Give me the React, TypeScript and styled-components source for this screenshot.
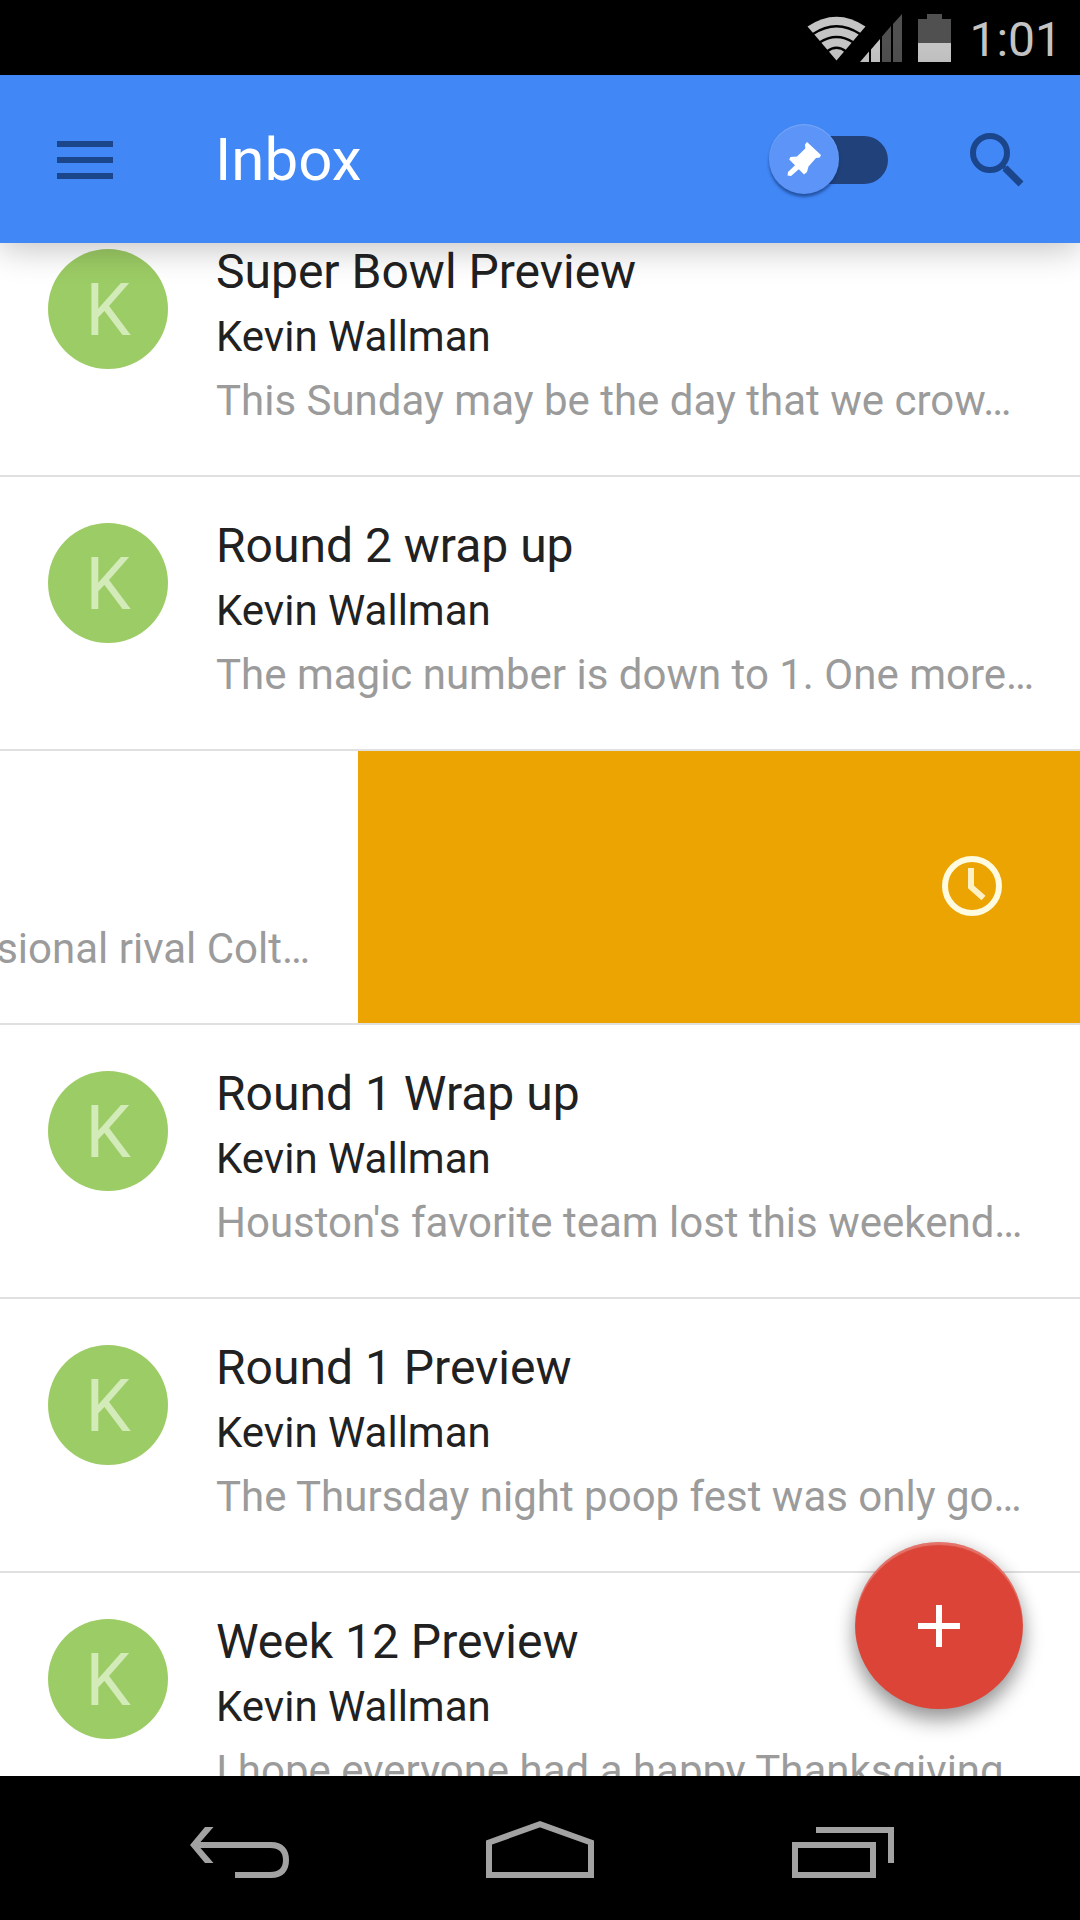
import React from "react";
import styled, { createGlobalStyle } from "styled-components";

const GlobalStyle = createGlobalStyle`
  * { box-sizing: border-box; }
  body {
    margin: 0;
    background: #000;
    font-family: Roboto, "Noto Sans", sans-serif;
  }
`;

const Screen = styled.div`
  display: flex;
  flex-direction: column;
  height: 100vh;
  overflow: hidden;
`;

const StatusBar = styled.div`
  display: flex;
  align-items: center;
  justify-content: flex-end;
  flex: none;
  height: 75px;
  padding: 0 18px;
  background: #000;
  color: #c4c4c4;
`;

const StatusIcons = styled.svg`
  display: block;
  margin-right: 18px;
`;

const Time = styled.time`
  padding-top: 4px;
  font-size: 48px;
  line-height: 64px;
`;

const AppBar = styled.header`
  position: relative;
  z-index: 1;
  display: flex;
  align-items: center;
  flex: none;
  height: 168px;
  padding: 2px 56px 0;
  background: #4187f6;
  box-shadow: 0 6px 32px rgba(0, 0, 0, 0.24);
`;

const IconButton = styled.button`
  display: flex;
  align-items: center;
  justify-content: center;
  padding: 0;
  border: 0;
  background: none;
  color: #1c468c;
  cursor: pointer;
`;

const Title = styled.h1`
  flex: 1;
  margin: 0 0 0 101px;
  color: #fff;
  font-size: 60px;
  font-weight: 400;
  line-height: 72px;
`;

const Toggle = styled.label`
  display: grid;
  align-items: center;
  width: 119px;
  height: 72px;
  margin-right: 82px;
  cursor: pointer;

  & > * {
    grid-area: 1 / 1;
  }
`;

const ToggleInput = styled.input`
  width: 100%;
  height: 100%;
  margin: 0;
  opacity: 0;
`;

const Track = styled.span`
  justify-self: end;
  width: 98px;
  height: 48px;
  border-radius: 24px;
  background: #21417a;
`;

const Knob = styled.span`
  display: flex;
  align-items: center;
  justify-content: center;
  align-self: start;
  width: 70px;
  height: 70px;
  border-radius: 50%;
  background: #5c95f7;
  box-shadow: 0 3px 3px rgba(16, 48, 110, 0.6), inset 0 1px 1px rgba(255, 255, 255, 0.2);
`;

const Main = styled.main`
  position: relative;
  flex: 1;
  min-height: 0;
  overflow: hidden;
  background: #fff;
`;

const List = styled.ul`
  margin: -40px 0 0;
  padding: 0;
  list-style: none;
`;

const Row = styled.li`
  display: flex;
  height: 274px;
  padding: 37px 48px 0;
  border-bottom: 2px solid #e0e0e0;
`;

const Avatar = styled.div`
  display: flex;
  align-items: center;
  justify-content: center;
  flex: none;
  width: 120px;
  height: 120px;
  margin: 9px 48px 0 0;
  padding-top: 4px;
  border-radius: 50%;
  background: #9ccc65;
  color: #d3eab9;
  font-size: 72px;
  line-height: 84px;
`;

const Message = styled.div`
  flex: 1;
  min-width: 0;
  white-space: nowrap;
`;

const Subject = styled.h2`
  margin: 0;
  color: #212121;
  font-size: 48px;
  font-weight: 400;
  line-height: 64px;
`;

const Sender = styled.p`
  margin: 0;
  color: #212121;
  font-size: 42px;
  line-height: 66px;
`;

const Snippet = styled.p`
  margin: 0;
  color: #9b9b9b;
  font-size: 42px;
  line-height: 62px;
`;

const SwipedRow = styled.li`
  display: grid;
  grid-template-columns: 358fr 722fr;
  height: 274px;
  border-bottom: 2px solid #e0e0e0;
`;

const SwipedCard = styled.div`
  display: flex;
  justify-content: flex-end;
  min-width: 0;
  overflow: hidden;
  padding: 167px 48px 0 0;
  white-space: nowrap;
`;

const SnoozePanel = styled.div`
  display: flex;
  align-items: center;
  justify-content: flex-end;
  padding: 0 78px 2px 0;
  background: #eca403;
`;

const Fab = styled.button`
  position: absolute;
  right: 57px;
  bottom: 67px;
  display: flex;
  align-items: center;
  justify-content: center;
  width: 168px;
  height: 167px;
  padding: 0;
  border: 0;
  border-radius: 50%;
  background: #db4437;
  box-shadow: 0 12px 20px rgba(0, 0, 0, 0.36), 0 0 18px rgba(0, 0, 0, 0.12),
    inset 0 3px 1px rgba(255, 255, 255, 0.25);
  cursor: pointer;
`;

const NavBar = styled.nav`
  display: grid;
  grid-template-columns: repeat(3, 1fr);
  flex: none;
  height: 144px;
  padding: 0 90px;
  background: #000;
`;

const NavButton = styled(IconButton)`
  color: #a2a2a2;
`;

type Mail = { subject: string; snippet: string; swiped?: boolean };

const mails: Mail[] = [
  { subject: "Super Bowl Preview", snippet: "This Sunday may be the day that we crow…" },
  { subject: "Round 2 wrap up", snippet: "The magic number is down to 1. One more…" },
  { subject: "", snippet: "sional rival Colt…", swiped: true },
  { subject: "Round 1 Wrap up", snippet: "Houston's favorite team lost this weekend…" },
  { subject: "Round 1 Preview", snippet: "The Thursday night poop fest was only go…" },
  { subject: "Week 12 Preview", snippet: "I hope everyone had a happy Thanksgiving" },
];

function DeviceStatus() {
  return (
    <StatusIcons width="144" height="48" viewBox="0 0 144 48" aria-hidden="true">
      <path d="M0.5 12.5Q29.500 -7 58.500 12.500L29.500 46.500Z" fill="#c4c4c4" />
      <g fill="none" stroke="#000" strokeWidth="2.400">
        <path d="M6 20Q29.500 4.500 53 20" />
        <path d="M12.500 28.500Q29.500 17.500 46.500 28.500" />
        <path d="M20 37.500Q29.500 30 39 37.500" />
      </g>
      <path d="M53 48L62 37.500V48ZM64 35.500L73 25V48H64Z" fill="#c4c4c4" />
      <path d="M75 22.500L84 12V48H75ZM86 10L95 0V48H86Z" fill="#505050" />
      <path d="M111 5h9V0h15v5h9v24h-33Z" fill="#505050" />
      <path d="M111 29h33v19h-33Z" fill="#c4c4c4" />
    </StatusIcons>
  );
}

function PinIcon() {
  return (
    <svg width="36" height="36" viewBox="0 0 36 36" aria-hidden="true">
      <path
        d="M21 1L35 14L33.800 16.500L30 17L22.500 25.500L21 31L18 33.500L12.800 28.300L5 35L1.500 34.500L2 31L9 24.300L3.200 18.500L4.500 16L11 15.500L19.300 7.500L19 3.500Z"
        fill="#fff"
      />
    </svg>
  );
}

function MailRow({ subject, snippet, swiped }: Mail) {
  if (swiped) {
    return (
      <SwipedRow>
        <SwipedCard>
          <Snippet>{snippet}</Snippet>
        </SwipedCard>
        <SnoozePanel>
          <svg width="60" height="60" viewBox="0 0 60 60" fill="none" aria-label="Snooze">
            <circle cx="30" cy="30" r="27" stroke="#fffbe0" strokeWidth="6" />
            <path d="M29 12V31L41.500 42" stroke="#fdf0c4" strokeWidth="6" />
          </svg>
        </SnoozePanel>
      </SwipedRow>
    );
  }
  return (
    <Row>
      <Avatar>K</Avatar>
      <Message>
        <Subject>{subject}</Subject>
        <Sender>Kevin Wallman</Sender>
        <Snippet>{snippet}</Snippet>
      </Message>
    </Row>
  );
}

export default function App() {
  return (
    <Screen>
      <GlobalStyle />
      <StatusBar>
        <DeviceStatus />
        <Time>1:01</Time>
      </StatusBar>
      <AppBar>
        <IconButton aria-label="Menu">
          <svg width="58" height="38" viewBox="0 0 58 38" fill="currentColor">
            <path d="M1 0h56v6H1ZM1 16h56v6H1ZM1 32h56v6H1Z" />
          </svg>
        </IconButton>
        <Title>Inbox</Title>
        <Toggle>
          <Track />
          <Knob>
            <PinIcon />
          </Knob>
          <ToggleInput type="checkbox" role="switch" aria-label="Pinned only" />
        </Toggle>
        <IconButton aria-label="Search">
          <svg width="54" height="54" viewBox="0 0 54 54" fill="none" stroke="currentColor">
            <circle cx="20" cy="20" r="17" strokeWidth="6" />
            <path d="M31 31L35 35" strokeWidth="4" />
            <path d="M35 35L51 51" strokeWidth="7" />
          </svg>
        </IconButton>
      </AppBar>
      <Main>
        <List>
          {mails.map((mail) => (
            <MailRow key={mail.snippet} {...mail} />
          ))}
        </List>
        <Fab aria-label="Compose">
          <svg width="42" height="42" viewBox="0 0 42 42" fill="#fff">
            <path d="M18 0h6v18h18v6H24v18h-6V24H0v-6h18Z" />
          </svg>
        </Fab>
      </Main>
      <NavBar>
        <NavButton aria-label="Back">
          <svg width="108" height="60" viewBox="0 0 108 60" fill="none">
            <path d="M4 27L19 9H27.500L14.500 24H85C97 24 103 31 103 42C103 53 97 60 85 60H49V54H84C93 54 97 50 97 42C97 34 93 30 84 30H14.500L27.500 45H19Z" fill="currentColor" />
          </svg>
        </NavButton>
        <NavButton aria-label="Home">
          <svg width="108" height="60" viewBox="0 0 108 60" fill="none">
            <path d="M3 57V24.500L54 6.200L105 24.500V57Z" stroke="currentColor" strokeWidth="6" />
          </svg>
        </NavButton>
        <NavButton aria-label="Recent apps">
          <svg width="108" height="60" viewBox="0 0 108 60" fill="none" stroke="currentColor" strokeWidth="6">
            <path d="M9 27H87V57H9Z" />
            <path d="M30 12H105V45" />
          </svg>
        </NavButton>
      </NavBar>
    </Screen>
  );
}
